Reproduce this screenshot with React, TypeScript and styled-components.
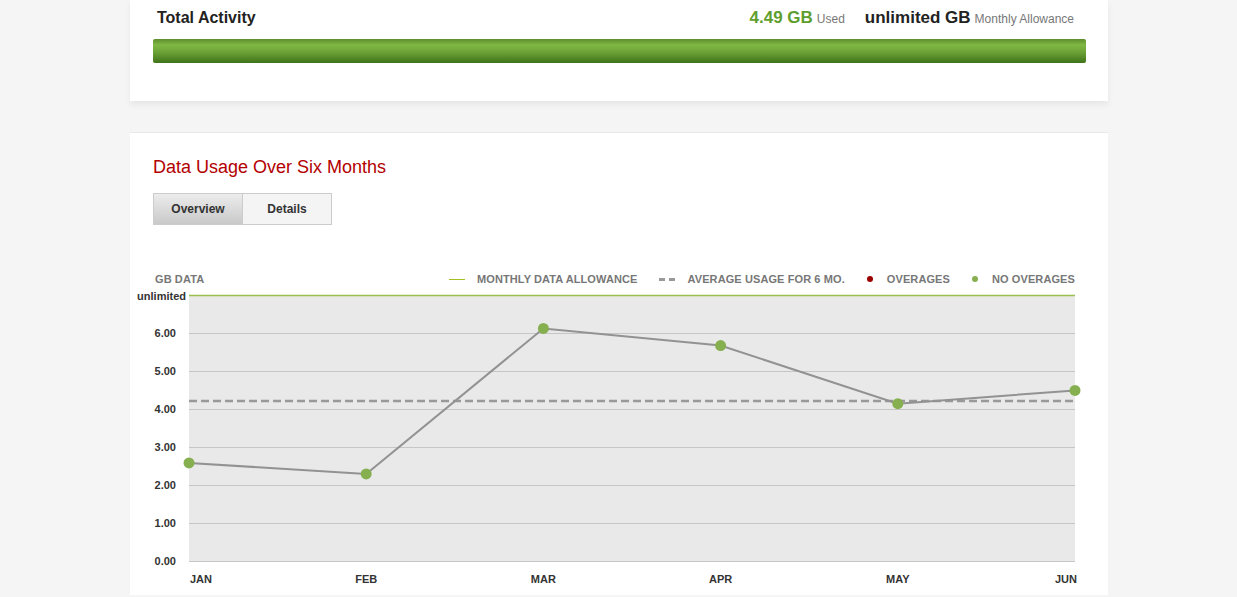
import styled, { createGlobalStyle } from 'styled-components';

const Global = createGlobalStyle`
  body { margin: 0; background: #f5f5f5; font-family: 'Liberation Sans', Arial, sans-serif; }
`;

const Page = styled.div`
  width: 978px;
  margin: 0 auto;
  padding-left: 1px;
`;

const Card = styled.section<{ $top?: boolean }>`
  background: #fff;
  padding: ${p => (p.$top ? '8px 22px 38px 23px' : '24px 0 0 0')};
  box-shadow: ${p => (p.$top ? '0 4px 6px rgba(0,0,0,0.06)' : 'none')};
  margin-bottom: ${p => (p.$top ? '31px' : '0')};
  border-top: ${p => (p.$top ? 'none' : '1px solid #e8e8e8')};
`;

const Header = styled.div`
  display: flex;
  align-items: baseline;
  justify-content: space-between;
  height: 24px;
  padding-right: 12px;
  padding-left: 4px;
`;

const Title = styled.div`
  font-size: 16px;
  font-weight: bold;
  color: #222;
`;

const Stats = styled.div`
  display: flex;
  align-items: baseline;
  gap: 20px;
`;

const Stat = styled.span<{ $color: string }>`
  font-size: 17px;
  font-weight: bold;
  color: ${p => p.$color};
  small {
    font-size: 12px;
    font-weight: normal;
    color: #777;
    margin-left: 4px;
  }
`;

const Bar = styled.div`
  margin-top: 7px;
  height: 24px;
  border-radius: 2px;
  background: linear-gradient(#5c8e2c 0%, #80b844 25%, #6ca236 55%, #3f731a 100%);
`;

const SectionTitle = styled.h2`
  margin: 0 0 15px 23px;
  font-size: 18px;
  font-weight: normal;
  color: #b30000;
`;

const Tabs = styled.div`
  display: flex;
  margin-left: 23px;
`;

const Tab = styled.div<{ $active?: boolean }>`
  width: 88px;
  height: 30px;
  display: flex;
  align-items: center;
  justify-content: center;
  font-size: 12px;
  font-weight: bold;
  color: #333;
  border: 1px solid #ccc;
  margin-left: ${p => (p.$active ? '0' : '-1px')};
  background: ${p => (p.$active ? 'linear-gradient(#ececec, #c9c9c9)' : '#f4f4f4')};
`;

const Legend = styled.div`
  display: flex;
  align-items: center;
  margin: 48px 33px 0 25px;
  font-family: 'Liberation Sans Narrow', 'Liberation Sans', Arial, sans-serif;
  font-size: 11px;
  font-weight: bold;
  color: #777;
  letter-spacing: 0.1px;
`;

const LegendTitle = styled.span`
  margin-right: auto;
`;

const LegendItem = styled.span`
  display: flex;
  align-items: center;
  gap: 12px;
  margin-left: 22px;
`;

const Line = styled.span<{ $dashed?: boolean }>`
  width: 16px;
  height: ${p => (p.$dashed ? '3px' : '1px')};
  background: ${p => (p.$dashed ? 'linear-gradient(90deg,#999 0 6px,transparent 6px 10px,#999 10px 16px)' : '#a3c11e')};
`;

const Dot = styled.span<{ $color: string }>`
  width: 6px;
  height: 6px;
  border-radius: 50%;
  background: ${p => p.$color};
  margin-right: 2px;
`;

const X0 = 59;
const X1 = 945;
const yFor = (v: number) => 273 - v * 38;
const points = [2.58, 2.29, 6.12, 5.67, 4.14, 4.49];
const months = ['JAN', 'FEB', 'MAR', 'APR', 'MAY', 'JUN'];
const xFor = (i: number) => X0 + ((X1 - X0) / 5) * i;

function Chart() {
  const path = points.map((v, i) => `${i ? 'L' : 'M'}${xFor(i)} ${yFor(v)}`).join(' ');
  return (
    <svg width={978} height={307} style={{ display: 'block', marginTop: 3 }} fontFamily="'Liberation Sans', Arial, sans-serif">
      <rect x={X0} y={7} width={X1 - X0} height={266} fill="#e9e9e9" />
      {[0, 1, 2, 3, 4, 5, 6].map(v => (
        <g key={v}>
          <line x1={X0} x2={X1} y1={yFor(v) + 0.5} y2={yFor(v) + 0.5} stroke="#c6c6c6" />
          <text x={46} y={yFor(v) + 4} fontSize={11} fontWeight="bold" fill="#333" textAnchor="end">{v.toFixed(2)}</text>
        </g>
      ))}
      <line x1={X0} x2={X1} y1={7.5} y2={7.5} stroke="#9bbf4e" strokeWidth={1.5} />
      <text x={56} y={12} fontSize={11} fontWeight="bold" fill="#333" textAnchor="end">unlimited</text>
      <line x1={X0} x2={X1} y1={113} y2={113} stroke="#999" strokeWidth={2.5} strokeDasharray="8 4" />
      <path d={path} fill="none" stroke="#929292" strokeWidth={2} />
      {points.map((v, i) => (
        <circle key={i} cx={xFor(i)} cy={yFor(v)} r={5.5} fill="#86b04f" />
      ))}
      {months.map((m, i) => (
        <text key={m} x={i === 0 ? 71 : i === 5 ? 936 : xFor(i)} y={295} fontSize={11} fontWeight="bold" fill="#333" textAnchor="middle">{m}</text>
      ))}
    </svg>
  );
}

export default function App() {
  return (
    <>
      <Global />
      <Page>
        <Card $top>
          <Header>
            <Title>Total Activity</Title>
            <Stats>
              <Stat $color="#5f9e2d">4.49 GB<small>Used</small></Stat>
              <Stat $color="#222">unlimited GB<small>Monthly Allowance</small></Stat>
            </Stats>
          </Header>
          <Bar />
        </Card>
        <Card>
          <SectionTitle>Data Usage Over Six Months</SectionTitle>
          <Tabs>
            <Tab $active>Overview</Tab>
            <Tab>Details</Tab>
          </Tabs>
          <Legend>
            <LegendTitle>GB DATA</LegendTitle>
            <LegendItem><Line />MONTHLY DATA ALLOWANCE</LegendItem>
            <LegendItem><Line $dashed />AVERAGE USAGE FOR 6 MO.</LegendItem>
            <LegendItem><Dot $color="#9b0000" />OVERAGES</LegendItem>
            <LegendItem><Dot $color="#86b04f" />NO OVERAGES</LegendItem>
          </Legend>
          <Chart />
        </Card>
      </Page>
    </>
  );
}
